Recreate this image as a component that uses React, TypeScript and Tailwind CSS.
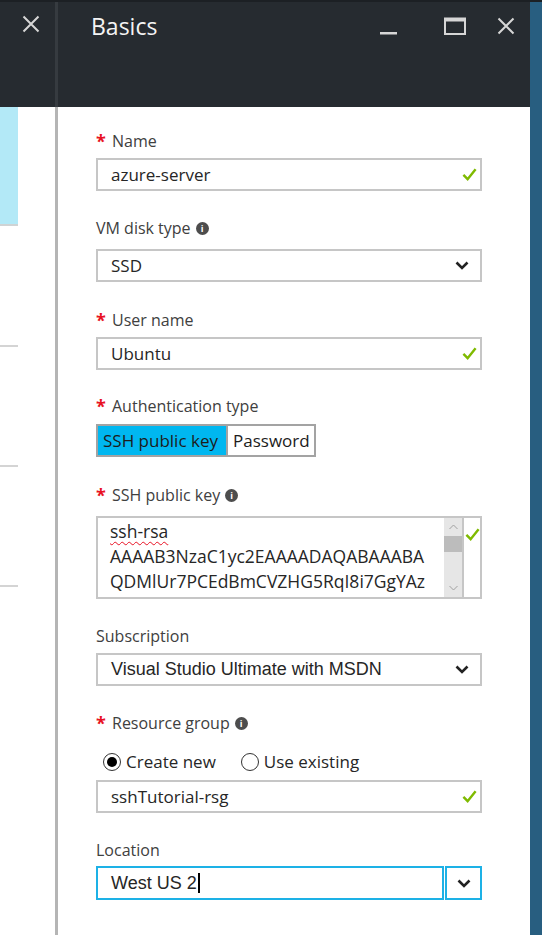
import type { ReactNode } from 'react';

function Check() {
  return (
    <svg width="15" height="15" viewBox="0 0 16 16" fill="none">
      <path d="M1.5 8.5 L6 13 L14.5 2.5" stroke="#7fba00" strokeWidth="2.6" />
    </svg>
  );
}

function Chevron() {
  return (
    <svg width="14" height="9" viewBox="0 0 14 9" fill="none">
      <path d="M1.5 1.5 L7 7 L12.5 1.5" stroke="#222" strokeWidth="2.6" />
    </svg>
  );
}

function InfoIcon() {
  return (
    <span className="ml-[5px] inline-flex h-[13px] w-[13px] items-center justify-center rounded-full bg-[#4d4d4d] text-[9px] font-bold leading-none text-white">
      i
    </span>
  );
}

function CloseIcon() {
  return (
    <svg width="18" height="18" viewBox="0 0 18 18" fill="none">
      <path d="M1.5 1.5 L16.5 16.5 M16.5 1.5 L1.5 16.5" stroke="#d6d6d6" strokeWidth="2" />
    </svg>
  );
}

function Label({ children, required, info, mt, mb }: { children: ReactNode; required?: boolean; info?: boolean; mt: string; mb: string }) {
  return (
    <div className={`flex h-[22px] items-center text-[16px] leading-[22px] text-[#404040] ${mt} ${mb}`}>
      {required && <span className="mr-[8px] w-[8px] text-[18px] font-bold text-[#e81123]">*</span>}
      <span>{children}</span>
      {info && <InfoIcon />}
    </div>
  );
}

function TextBox({ value }: { value: string }) {
  return (
    <div className="flex h-[33px] items-center border-2 border-[#c6c6c6] pl-[13px] pr-[3px]">
      <span className="flex-1 text-[17px] text-[#262626]">{value}</span>
      <Check />
    </div>
  );
}

function SelectBox({ value, arial }: { value: string; arial?: boolean }) {
  return (
    <div className="flex h-[33px] items-center border-2 border-[#c6c6c6] pl-[13px] pr-[11px]">
      <span className={`flex-1 text-[#262626] ${arial ? "font-['Liberation_Sans',Arial,sans-serif] text-[18px]" : 'text-[17px]'}`}>
        {value}
      </span>
      <Chevron />
    </div>
  );
}

function Radio({ checked, label }: { checked?: boolean; label: string }) {
  return (
    <div className="flex items-center gap-[5px]">
      <span className="flex h-[18px] w-[18px] items-center justify-center rounded-full border-[1.5px] border-[#333]">
        {checked && <span className="h-[10px] w-[10px] rounded-full bg-black" />}
      </span>
      <span className="text-[17px] text-[#262626]">{label}</span>
    </div>
  );
}

export default function App() {
  return (
    <div className="flex h-[935px] w-[542px] flex-col overflow-hidden bg-white font-['Open_Sans',sans-serif]">
      <div className="h-[2px] bg-[#1c2024]" />
      <div className="flex flex-1">
        {/* collapsed blade on the left */}
        <div className="flex w-[55px] flex-col">
          <div className="h-[105px] bg-[#262b30] pl-[22px] pt-[13px]">
            <CloseIcon />
          </div>
          <div className="h-[119px] w-[18px] border-b-2 border-[#cfd3d4] bg-[#b3e9f7]" />
          <div className="mt-[119px] h-[2px] w-[18px] bg-[#d4d4d4]" />
          <div className="mt-[118px] h-[2px] w-[18px] bg-[#d4d4d4]" />
          <div className="mt-[118px] h-[2px] w-[18px] bg-[#d4d4d4]" />
        </div>
        <div className="flex w-[3px] flex-col">
          <div className="h-[105px] bg-[#363b40]" />
          <div className="flex-1 bg-[#b5b5b5]" />
        </div>

        {/* Basics blade */}
        <div className="flex flex-1 flex-col">
          <div className="h-[105px] bg-[#262b30]">
            <div className="flex h-[48px] items-center pl-[33px] pr-[15px]">
              <span className="flex-1 text-[23px] text-[#f4f4f4]">Basics</span>
              <svg width="17" height="18" viewBox="0 0 17 18" className="mr-[47px]">
                <rect x="0" y="15" width="17" height="2.5" fill="#d6d6d6" />
              </svg>
              <svg width="22" height="18" viewBox="0 0 22 18" fill="none" className="mr-[31px]">
                <rect x="1" y="1.5" width="20" height="15.5" stroke="#d6d6d6" strokeWidth="2" />
                <rect x="1" y="1" width="20" height="3.5" fill="#d6d6d6" />
              </svg>
              <CloseIcon />
            </div>
          </div>

          <div className="flex flex-col pl-[38px] pr-[48px]">
            <Label required mt="mt-[23px]" mb="mb-[6px]">Name</Label>
            <TextBox value="azure-server" />

            <Label info mt="mt-[26px]" mb="mb-[10px]">VM disk type</Label>
            <SelectBox value="SSD" />

            <Label required mt="mt-[27px]" mb="mb-[6px]">User name</Label>
            <TextBox value="Ubuntu" />

            <Label required mt="mt-[25px]" mb="mb-[7px]">Authentication type</Label>
            <div className="flex h-[33px] w-[220px] border-2 border-[#a3a3a3] text-[17px] text-[#1c1c1c]">
              <div className="flex w-[130px] items-center border-r-2 border-[#a3a3a3] bg-[#00b7f0] pl-[5px]">SSH public key</div>
              <div className="flex flex-1 items-center pl-[5px]">Password</div>
            </div>

            <Label required info mt="mt-[27px]" mb="mb-[10px]">SSH public key</Label>
            <div className="flex h-[83px] border-2 border-[#c6c6c6]">
              <div className="flex-1 overflow-hidden whitespace-nowrap pl-[12px] pt-[1px] text-[17.5px] leading-[25px] text-[#262626]">
                <div>
                  <span className="underline decoration-[#e81123] decoration-wavy decoration-1 underline-offset-[3px]">ssh-rsa</span>
                </div>
                <div>AAAAB3NzaC1yc2EAAAADAQABAAABA</div>
                <div>QDMlUr7PCEdBmCVZHG5RqI8i7GgYAz</div>
              </div>
              <div className="flex w-[18px] flex-col bg-[#e6e6e6]">
                <div className="flex h-[18px] items-center justify-center">
                  <svg width="9" height="6" viewBox="0 0 9 6" fill="none">
                    <path d="M0.5 5 L4.5 1 L8.5 5" stroke="#a0a0a0" strokeWidth="1" />
                  </svg>
                </div>
                <div className="h-[16px] bg-[#bcbcbc]" />
                <div className="flex-1" />
                <div className="flex h-[18px] items-center justify-center">
                  <svg width="9" height="6" viewBox="0 0 9 6" fill="none">
                    <path d="M0.5 1 L4.5 5 L8.5 1" stroke="#a0a0a0" strokeWidth="1" />
                  </svg>
                </div>
              </div>
              <div className="w-[18px] border-l-2 border-[#c6c6c6] pl-[1px] pt-[9px]">
                <Check />
              </div>
            </div>

            <Label mt="mt-[26px]" mb="mb-[6px]">Subscription</Label>
            <SelectBox value="Visual Studio Ultimate with MSDN" arial />

            <Label required info mt="mt-[26px]" mb="mb-0">Resource group</Label>
            <div className="mb-[7px] mt-[17px] flex h-[22px] items-center gap-[25px] pl-[7px]">
              <Radio checked label="Create new" />
              <Radio label="Use existing" />
            </div>
            <TextBox value="sshTutorial-rsg" />

            <Label mt="mt-[26px]" mb="mb-[5px]">Location</Label>
            <div className="flex h-[34px] gap-[1px]">
              <div className="flex flex-1 items-center border-2 border-[#1db1e6] pl-[13px]">
                <span className="font-['Liberation_Sans',Arial,sans-serif] text-[18px] text-[#262626]">West US 2</span>
                <span className="ml-[1px] h-[20px] w-[2px] bg-black" />
              </div>
              <div className="flex w-[37px] items-center justify-center border-2 border-[#1db1e6]">
                <Chevron />
              </div>
            </div>
          </div>
        </div>

        <div className="w-[12px] bg-[#285e80]" />
      </div>
    </div>
  );
}
